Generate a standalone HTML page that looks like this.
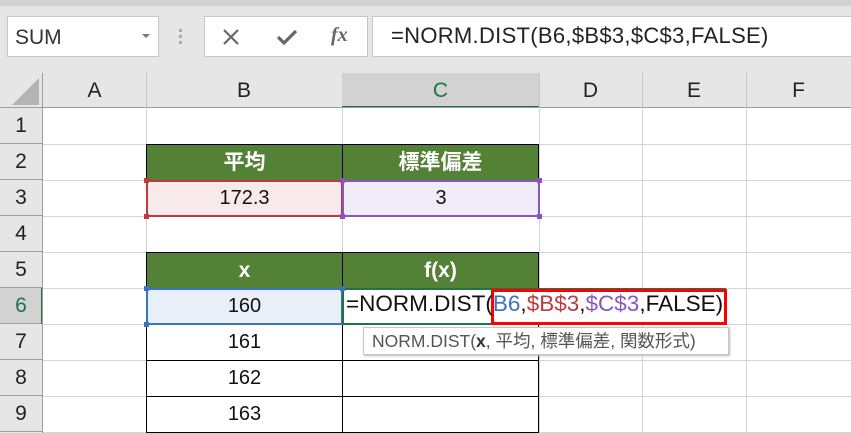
<!DOCTYPE html><html><head><meta charset="utf-8"><style>
*{margin:0;padding:0;box-sizing:border-box}
body{width:851px;height:433px;overflow:hidden;background:#fff;position:relative;font-family:"Liberation Sans","Noto Sans CJK JP",sans-serif}
.a{position:absolute}
.hl{position:absolute;height:1px;background:#d4d4d4}
.vl{position:absolute;width:1px;background:#d4d4d4}
.ch{position:absolute;top:73px;height:35px;font-size:21px;color:#222;text-align:center;line-height:35px}
.rh{position:absolute;left:0;width:42px;height:36px;font-size:21px;color:#222;text-align:center;line-height:36px}
.c{position:absolute;font-size:20px;text-align:center;line-height:36px;color:#111}
</style></head><body>
<div class="a" style="left:0;top:0;width:851px;height:73px;background:#e6e6e6"></div>
<div class="a" style="left:0;top:0;width:851px;height:6px;background:#d2d2d2"></div>
<div class="a" style="left:7px;top:16px;width:152px;height:41px;background:#fff;border:1px solid #c6c6c6"></div>
<div class="a" style="left:15px;top:26px;font-size:21px;color:#333">SUM</div>
<div class="a" style="left:142px;top:34px;width:0;height:0;border-left:4px solid transparent;border-right:4px solid transparent;border-top:4px solid #777"></div>
<div class="a" style="left:179px;top:29px;width:3px;height:3px;background:#aaa;box-shadow:0 6px 0 #aaa,0 12px 0 #aaa"></div>
<div class="a" style="left:204px;top:16px;width:164px;height:41px;background:#fff;border:1px solid #c6c6c6"></div>
<svg class="a" style="left:222px;top:28px" width="18" height="18"><path d="M2 2L16 16M16 2L2 16" stroke="#666" stroke-width="2.2"/></svg>
<svg class="a" style="left:276px;top:28px" width="22" height="18"><path d="M2 9L8 15L20 3" stroke="#666" stroke-width="3.2" fill="none"/></svg>
<div class="a" style="left:331px;top:24px;font-family:'Liberation Serif',serif;font-style:italic;font-weight:bold;font-size:20px;color:#666">fx</div>
<div class="a" style="left:372px;top:16px;width:479px;height:41px;background:#fff;border:1px solid #c6c6c6;border-right:none"></div>
<div class="a" style="left:391px;top:23px;font-size:22px;color:#222;letter-spacing:0.3px;white-space:nowrap">=NORM.DIST(B6,$B$3,$C$3,FALSE)</div>
<!-- headers -->
<div class="a" style="left:0;top:73px;width:851px;height:35px;background:#e6e6e6"></div>
<div class="a" style="left:342px;top:73px;width:197px;height:35px;background:#d2d2d2"></div>
<div class="a" style="left:342px;top:106px;width:197px;height:2px;background:#217346"></div>
<div class="a" style="left:0;top:107px;width:851px;height:1px;background:#9e9e9e"></div>
<div class="a" style="left:12px;top:78px;width:0;height:0;border-left:27px solid transparent;border-bottom:27px solid #b4b4b4"></div>
<div class="a" style="left:0;top:108px;width:42px;height:325px;background:repeating-linear-gradient(#e6e6e6 0 35px,#9e9e9e 35px 36px)"></div>
<div class="a" style="left:0;top:288px;width:42px;height:35px;background:#d2d2d2"></div>
<div class="a" style="left:41px;top:288px;width:2px;height:36px;background:#217346"></div>
<div class="a" style="left:42px;top:73px;width:1px;height:360px;background:#9e9e9e"></div>
<div class="vl" style="left:146px;top:73px;height:35px;background:#c6c6c6"></div>
<div class="vl" style="left:539px;top:73px;height:35px;background:#c6c6c6"></div>
<div class="vl" style="left:642px;top:73px;height:35px;background:#c6c6c6"></div>
<div class="vl" style="left:746px;top:73px;height:35px;background:#c6c6c6"></div>
<div class="ch" style="left:43px;width:103px">A</div>
<div class="ch" style="left:146px;width:196px">B</div>
<div class="ch" style="left:342px;width:197px;color:#217346">C</div>
<div class="ch" style="left:539px;width:103px">D</div>
<div class="ch" style="left:642px;width:104px">E</div>
<div class="ch" style="left:746px;width:105px">F</div>
<div class="rh" style="top:108px">1</div><div class="rh" style="top:144px">2</div><div class="rh" style="top:180px">3</div><div class="rh" style="top:216px">4</div><div class="rh" style="top:252px">5</div><div class="rh" style="top:288px;color:#217346">6</div><div class="rh" style="top:324px">7</div><div class="rh" style="top:360px">8</div><div class="rh" style="top:396px">9</div>
<!-- gridlines -->
<div class="hl" style="left:43px;top:144px;width:808px"></div><div class="hl" style="left:43px;top:180px;width:808px"></div><div class="hl" style="left:43px;top:216px;width:808px"></div><div class="hl" style="left:43px;top:252px;width:808px"></div><div class="hl" style="left:43px;top:288px;width:808px"></div><div class="hl" style="left:43px;top:324px;width:808px"></div><div class="hl" style="left:43px;top:360px;width:808px"></div><div class="hl" style="left:43px;top:396px;width:808px"></div><div class="hl" style="left:43px;top:432px;width:808px"></div>
<div class="vl" style="left:146px;top:108px;height:325px"></div><div class="vl" style="left:342px;top:108px;height:325px"></div><div class="vl" style="left:539px;top:108px;height:325px"></div><div class="vl" style="left:642px;top:108px;height:325px"></div><div class="vl" style="left:746px;top:108px;height:325px"></div>
<!-- table -->
<div class="c" style="left:146px;top:144px;width:197px;height:37px;background:#538135;border:1px solid #000;color:#fff;font-weight:bold;font-size:21px">平均</div>
<div class="c" style="left:342px;top:144px;width:197px;height:37px;background:#538135;border:1px solid #000;color:#fff;font-weight:bold;font-size:21px">標準偏差</div>
<div class="c" style="left:146px;top:180px;width:197px;height:37px;background:#f8eaea;border:2px solid #c0393b;line-height:32px">172.3</div>
<div class="c" style="left:342px;top:180px;width:198px;height:37px;background:#f1ecf7;border:2px solid #8a55c0;line-height:32px">3</div>
<div class="c" style="left:146px;top:252px;width:197px;height:37px;background:#538135;border:1px solid #000;color:#fff;font-weight:bold;font-size:21px">x</div>
<div class="c" style="left:342px;top:252px;width:197px;height:37px;background:#538135;border:1px solid #000;color:#fff;font-weight:bold;font-size:21px">f(x)</div>
<div class="c" style="left:146px;top:324px;width:197px;height:37px;border:1px solid #000;line-height:35px">161</div>
<div class="c" style="left:146px;top:360px;width:197px;height:37px;border:1px solid #000;line-height:35px">162</div>
<div class="c" style="left:146px;top:396px;width:197px;height:37px;border:1px solid #000;line-height:35px">163</div>
<div class="a" style="left:342px;top:324px;width:197px;height:109px;border:1px solid #000;border-top:none"></div>
<div class="hl" style="left:342px;top:360px;width:197px;background:#000"></div><div class="hl" style="left:342px;top:396px;width:197px;background:#000"></div>
<div class="c" style="left:146px;top:288px;width:197px;height:37px;background:#e8eff9;border:2px solid #3a72c4;line-height:33px">160</div>
<div class="a" style="left:342px;top:288px;width:384px;height:37px;background:#fff;border:2px solid #217346;border-right:none"></div>
<div class="a" style="left:491px;top:289px;width:236px;height:36px;border:3px solid #f00"></div>
<div class="a" style="left:346px;top:291px;font-size:22.5px;color:#111;white-space:nowrap;letter-spacing:0">=NORM.DIST(<span style="color:#3a72c4">B6</span>,<span style="color:#c0393b">$B$3</span>,<span style="color:#8a55c0">$C$3</span>,FALSE)</div>
<!-- handles -->
<div class="a" style="left:144px;top:178px;width:5px;height:5px;background:#c0393b"></div><div class="a" style="left:144px;top:214px;width:5px;height:5px;background:#c0393b"></div>
<div class="a" style="left:340px;top:178px;width:5px;height:5px;background:#8a55c0"></div><div class="a" style="left:340px;top:214px;width:5px;height:5px;background:#8a55c0"></div><div class="a" style="left:537px;top:178px;width:5px;height:5px;background:#8a55c0"></div><div class="a" style="left:537px;top:214px;width:5px;height:5px;background:#8a55c0"></div>
<div class="a" style="left:144px;top:286px;width:5px;height:5px;background:#3a72c4"></div><div class="a" style="left:144px;top:322px;width:5px;height:5px;background:#3a72c4"></div><div class="a" style="left:340px;top:286px;width:5px;height:5px;background:#3a72c4"></div>
<!-- tooltip -->
<div class="a" style="left:363px;top:327px;width:366px;height:28px;background:#fff;border:1px solid #c6c6c6;box-shadow:1px 1px 2px #bbb;font-size:17.5px;color:#555;line-height:26px;padding-left:8px;white-space:nowrap">NORM.DIST(<b style="color:#333">x</b>, 平均, 標準偏差, 関数形式)</div>
</body></html>
